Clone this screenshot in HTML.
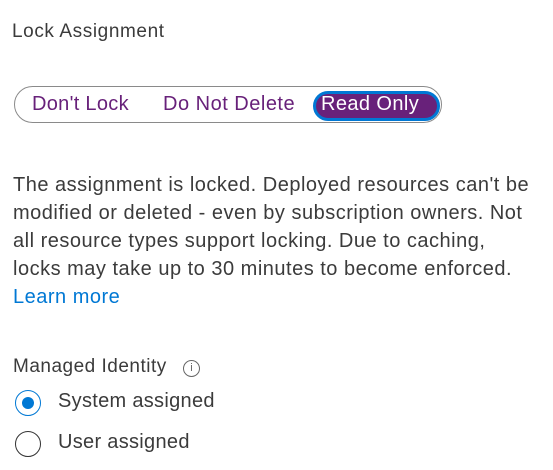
<!DOCTYPE html>
<html><head><style>
body{margin:0;width:553px;height:470px;background:#fff;font-family:"Liberation Sans",sans-serif;color:#3b3b3b;position:relative;overflow:hidden}
.a{position:absolute;white-space:nowrap}
</style></head><body>
<div class="a" style="left:12px;top:21px;font-size:19px;letter-spacing:0.6px;">Lock Assignment</div>
<div class="a" style="left:14px;top:86px;width:428px;height:37px;border:1px solid #8a8a8a;border-radius:19px;box-sizing:border-box;"></div>
<div class="a" style="left:32px;top:93px;font-size:20px;letter-spacing:0.3px;color:#68217a;">Don't Lock</div>
<div class="a" style="left:163px;top:93px;font-size:20px;letter-spacing:0.5px;color:#68217a;">Do Not Delete</div>
<div class="a" style="left:313px;top:91px;width:127px;height:30px;box-sizing:border-box;border:3px solid #0078d4;border-radius:15px;background:#68217a;"></div>
<div class="a" style="left:321px;top:93px;font-size:20px;letter-spacing:0.4px;color:#fff;">Read Only</div>
<div class="a" style="left:13px;top:171px;font-size:20px;line-height:28px;letter-spacing:0.5px;">The assignment is locked. Deployed resources can't be<br>modified or deleted - even by subscription owners. Not<br>all resource types support locking. Due to caching,<br>locks may take up to 30 minutes to become enforced.<br><span style="color:#0078d4">Learn more</span></div>
<div class="a" style="left:13px;top:356px;font-size:19px;letter-spacing:0.5px;">Managed Identity</div>
<div class="a" style="left:183px;top:360px;width:17px;height:17px;border:1px solid #666;border-radius:50%;box-sizing:border-box;font-size:11px;text-align:center;line-height:15px;color:#666;">i</div>
<div class="a" style="left:15px;top:390px;width:26px;height:26px;border:1px solid #0078d4;border-radius:50%;box-sizing:border-box;"></div>
<div class="a" style="left:22px;top:397px;width:12px;height:12px;background:#0078d4;border-radius:50%;"></div>
<div class="a" style="left:58px;top:390px;font-size:20px;letter-spacing:0.3px;">System assigned</div>
<div class="a" style="left:15px;top:431px;width:26px;height:26px;border:1px solid #333;border-radius:50%;box-sizing:border-box;"></div>
<div class="a" style="left:58px;top:431px;font-size:20px;letter-spacing:0.3px;">User assigned</div>
</body></html>
